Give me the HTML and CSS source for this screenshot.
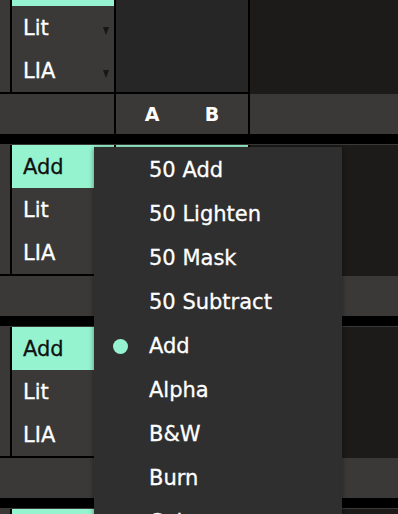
FILE: index.html
```html
<!DOCTYPE html>
<html>
<head>
    <meta charset="utf-8" />
    <title>Blend modes</title>
    <link rel="stylesheet" href="styles.css">
</head>
<body>
    <div class="stack">
        <!--block 1-->
        <div class="block">
            <div class="panel">
                <div class="gutter"></div>
                <div class="list">
                    <div class="row on"><span>Add</span><i class="caret"></i></div>
                    <div class="row"><span>Lit</span><i class="caret"></i></div>
                    <div class="row"><span>LIA</span><i class="caret"></i></div>
                </div>
                <div class="mid"></div>
                <div class="rest"></div>
            </div>
            <div class="bar">
                <div class="bar-left"></div>
                <div class="bar-ab"><span>A</span><span>B</span></div>
                <div class="bar-rest"></div>
            </div>
        </div>
        <!--block 2-->
        <div class="block">
            <div class="panel">
                <div class="gutter"></div>
                <div class="list">
                    <div class="row on"><span>Add</span><i class="caret"></i></div>
                    <div class="row"><span>Lit</span><i class="caret"></i></div>
                    <div class="row"><span>LIA</span><i class="caret"></i></div>
                </div>
                <div class="mid">
                    <div class="row on"></div>
                </div>
                <div class="rest"></div>
            </div>
            <div class="bar">
                <div class="bar-left"></div>
                <div class="bar-ab"><span>A</span><span>B</span></div>
                <div class="bar-rest"></div>
            </div>
        </div>
        <!--block 3-->
        <div class="block">
            <div class="panel">
                <div class="gutter"></div>
                <div class="list">
                    <div class="row on"><span>Add</span><i class="caret"></i></div>
                    <div class="row"><span>Lit</span><i class="caret"></i></div>
                    <div class="row"><span>LIA</span><i class="caret"></i></div>
                </div>
                <div class="mid"></div>
                <div class="rest"></div>
            </div>
            <div class="bar">
                <div class="bar-left"></div>
                <div class="bar-ab"><span>A</span><span>B</span></div>
                <div class="bar-rest"></div>
            </div>
        </div>
        <!--block 4-->
        <div class="block">
            <div class="panel">
                <div class="gutter"></div>
                <div class="list">
                    <div class="row on"><span>Add</span><i class="caret"></i></div>
                </div>
                <div class="mid"></div>
                <div class="rest"></div>
            </div>
        </div>
    </div>

    <!--Menu-->
    <div class="menu">
        <div class="opt"><i class="mark"></i>50 Add</div>
        <div class="opt"><i class="mark"></i>50 Lighten</div>
        <div class="opt"><i class="mark"></i>50 Mask</div>
        <div class="opt"><i class="mark"></i>50 Subtract</div>
        <div class="opt cur"><i class="mark"></i>Add</div>
        <div class="opt"><i class="mark"></i>Alpha</div>
        <div class="opt"><i class="mark"></i>B&amp;W</div>
        <div class="opt"><i class="mark"></i>Burn</div>
        <div class="opt"><i class="mark"></i>Color</div>
    </div>
</body>
</html>
```
FILE: styles.css
```css
body {
    margin: 0;
    background: #3a3937;
    overflow: hidden;
    font-family: "DejaVu Sans", sans-serif;
}

.stack {
    margin-top: -38px;
}

.block {
    height: 182px;
    box-sizing: border-box;
    padding-top: 1px;
    border-bottom: 10px solid #000;
    display: flex;
    flex-direction: column;
}

.panel {
    display: flex;
    height: 131px;
    flex: none;
}

    .panel .gutter, .panel .list, .panel .mid {
        box-sizing: border-box;
        border-right: 2px solid #000;
        border-bottom: 2px solid #000;
    }

    .panel .gutter {
        width: 12px;
    }

    .panel .list {
        width: 104px;
    }

    .panel .mid {
        width: 134px;
        background: #262626;
    }

    .panel .rest {
        flex: 1;
        background: #1c1b1a;
    }

.row {
    height: 43px;
    display: flex;
    align-items: center;
    justify-content: space-between;
    padding: 0 5px 0 11px;
    color: #fff;
    font-size: 21px;
    -webkit-text-stroke: 0.3px currentColor;
}

    .row.on {
        background: #95f3cf;
        color: #111;
    }

.caret {
    width: 0;
    height: 0;
    margin-top: 7px;
    border-top: 8px solid #171717;
    border-left: 3px solid transparent;
    border-right: 3px solid transparent;
}

.bar {
    display: flex;
    flex: 1;
}

    .bar .bar-left {
        width: 116px;
        box-sizing: border-box;
        border-right: 2px solid #000;
    }

    .bar .bar-ab {
        width: 134px;
        box-sizing: border-box;
        border-right: 2px solid #000;
        display: flex;
        justify-content: center;
        align-items: center;
        color: #fff;
        font-size: 19px;
        font-weight: bold;
    }

        .bar .bar-ab span {
            width: 60px;
            text-align: center;
        }

/* dropdown */
.menu {
    position: absolute;
    left: 94px;
    top: 147px;
    width: 248px;
    height: 420px;
    padding-top: 1px;
    background: #2f2f2f;
    box-shadow: 0 1px 5px rgba(0, 0, 0, .45);
}

.opt {
    height: 44px;
    display: flex;
    align-items: center;
    padding-left: 19px;
    color: #fff;
    font-size: 21px;
    -webkit-text-stroke: 0.3px #fff;
}

.mark {
    width: 15px;
    height: 15px;
    margin-right: 21px;
    border-radius: 50%;
}

.opt.cur .mark {
    background: #95f3cf;
}
```
